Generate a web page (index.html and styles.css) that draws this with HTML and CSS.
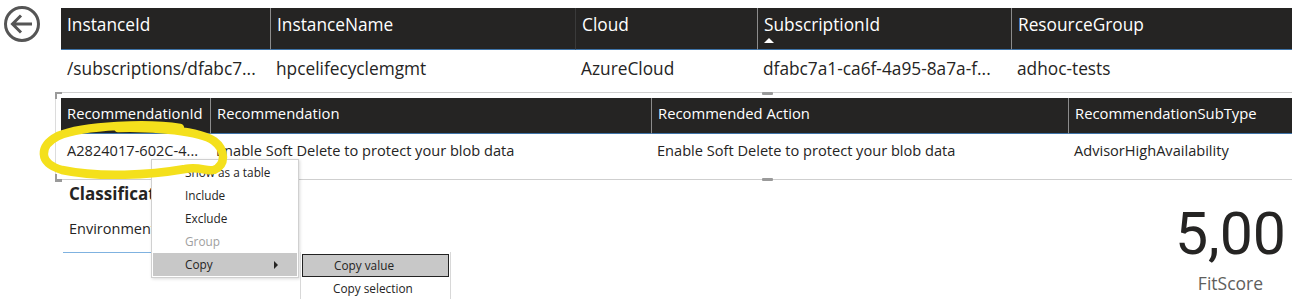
FILE: index.html
```html
<!DOCTYPE html>
<html>
<head>
<meta charset="utf-8">
<link rel="stylesheet" href="styles.css">
</head>
<body>
<div class="page">
  <div class="back">
    <svg width="38" height="38" viewBox="0 0 38 38"><circle cx="19" cy="19" r="16.5" fill="none" stroke="#555" stroke-width="3"/><path d="M9.5 19 H29 M18 10.5 L9.5 19 L18 27.5" fill="none" stroke="#555" stroke-width="3" stroke-linejoin="miter"/></svg>
  </div>
  <div class="main">
    <div class="grid top-grid">
      <div class="th">InstanceId</div>
      <div class="th">InstanceName</div>
      <div class="th dark-sep">Cloud</div>
      <div class="th sorted">SubscriptionId</div>
      <div class="th">ResourceGroup</div>
      <div class="td">/subscriptions/dfabc7...</div>
      <div class="td">hpcelifecyclemgmt</div>
      <div class="td">AzureCloud</div>
      <div class="td">dfabc7a1-ca6f-4a95-8a7a-f...</div>
      <div class="td">adhoc-tests</div>
    </div>
    <div class="rec-frame">
      <div class="grid rec-grid">
        <div class="th">RecommendationId</div>
        <div class="th">Recommendation</div>
        <div class="th">Recommended Action</div>
        <div class="th">RecommendationSubType</div>
        <div class="td">A2824017-602C-4...</div>
        <div class="td">Enable Soft Delete to protect your blob data</div>
        <div class="td">Enable Soft Delete to protect your blob data</div>
        <div class="td">AdvisorHighAvailability</div>
      </div>
    </div>
    <div class="lower">
      <div class="classif">
        <div class="classif-title">Classification</div>
        <div class="classif-value">Environment</div>
      </div>
      <div class="score">
        <div class="score-num">5,00</div>
        <div class="score-label">FitScore</div>
      </div>
    </div>
  </div>
</div>

<div class="menu">
  <div class="mi">Show as a table</div>
  <div class="mi">Include</div>
  <div class="mi">Exclude</div>
  <div class="mi disabled">Group</div>
  <div class="mi active">Copy<span class="caret"></span></div>
</div>
<div class="submenu">
  <div class="mi focused">Copy value</div>
  <div class="mi">Copy selection</div>
</div>

<svg class="scribble" width="240" height="70" viewBox="30 115 240 70"><path d="M180 128 C150 123, 84 125, 58 136 C39 146, 38 163, 62 170 C100 178, 150 175, 185 169 C200 166, 206 172, 214 170 C226 165, 226 150, 214 141 C200 131, 155 127, 118 128" fill="none" stroke="#f4e01c" stroke-width="8.5" stroke-linecap="round"/></svg>
</body>
</html>
```

FILE: styles.css
```css
html, body {
  margin: 0;
  padding: 0;
  background: #fff;
  overflow: hidden;
}
body {
  font-family: "Open Sans", "Noto Sans", sans-serif;
  color: #252423;
  width: 1292px;
  height: 299px;
  position: relative;
}
.page {
  display: flex;
  padding-top: 8px;
}
.back {
  width: 61px;
  flex: none;
}
.back svg {
  display: block;
  margin: -3px 0 0 3px;
}
.main {
  flex: 1;
  min-width: 0;
}
.grid {
  display: grid;
}
.top-grid {
  grid-template-columns: 209px 305px 182px 254px 1fr;
}
.th {
  background: #252423;
  color: #fff;
  white-space: nowrap;
  overflow: hidden;
  box-sizing: border-box;
  border-left: 1px solid #8c8c8c;
  border-bottom: 1px solid #3e73a8;
  position: relative;
}
.th:first-child {
  border-left: none;
}
.top-grid .th {
  height: 42px;
  font-size: 17.3px;
  line-height: 34px;
  padding-left: 6px;
}
.top-grid .th.dark-sep {
  border-left-color: #3a3a3a;
}
.sorted::after {
  content: "";
  position: absolute;
  left: 6px;
  top: 30px;
  border-left: 5px solid transparent;
  border-right: 5px solid transparent;
  border-bottom: 5px solid #fff;
}
.td {
  white-space: nowrap;
  overflow: hidden;
}
.top-grid .td {
  height: 42px;
  font-size: 17.3px;
  line-height: 38px;
  padding-left: 6px;
}
.rec-frame {
  margin-left: -6px;
  border-top: 1px solid #cfcfcf;
  border-left: 1px solid #dcdcdc;
  padding: 5px 0 0 5px;
  position: relative;
}
.rec-frame::before,
.rec-frame::after {
  content: "";
  position: absolute;
  left: -1px;
  width: 5px;
  height: 5px;
  border-left: 2px solid #9a9a9a;
}
.rec-frame::before {
  top: -1px;
  border-top: 2px solid #9a9a9a;
}
.rec-frame::after {
  bottom: -2px;
  border-bottom: 3px solid #9a9a9a;
}
.rec-grid {
  grid-template-columns: 149px 441px 417px 1fr;
  border-bottom: 1px solid #cfcfcf;
  position: relative;
}
.rec-grid::before,
.rec-grid::after {
  content: "";
  position: absolute;
  left: 701px;
  width: 11px;
  height: 3px;
  background: #9a9a9a;
  border-radius: 1px;
}
.rec-grid::before { top: -6px; }
.rec-grid::after { bottom: -2px; }
.rec-grid .th {
  height: 36px;
  font-size: 14.8px;
  line-height: 30px;
  padding-left: 6px;
}
.rec-grid .td {
  height: 45px;
  font-size: 14.6px;
  line-height: 32px;
  padding-left: 6px;
}
.lower {
  display: flex;
  justify-content: space-between;
}
.classif {
  margin-left: 2px;
  width: 230px;
  padding-left: 6px;
  border-bottom: 1px solid #7fb2e0;
  height: 72px;
}
.classif-title {
  font-weight: 700;
  font-size: 17px;
  line-height: 22px;
  margin-top: 3px;
}
.classif-value {
  font-size: 14.5px;
  line-height: 20px;
  margin-top: 14px;
}
.score {
  display: flex;
  flex-direction: column;
  align-items: center;
  margin-right: 6px;
  padding-top: 24px;
}
.score-num {
  font-family: Roboto, "DejaVu Sans", sans-serif;
  font-size: 59px;
  line-height: 60px;
  color: #252423;
}
.score-label {
  font-size: 17.5px;
  line-height: 22px;
  color: #605e5c;
  margin-top: 8px;
}
.scribble {
  position: absolute;
  left: 30px;
  top: 115px;
}
.menu {
  position: absolute;
  left: 151px;
  top: 159px;
  width: 148px;
  background: #fff;
  border: 1px solid #d0d0d0;
  box-shadow: 1px 1px 3px rgba(0,0,0,0.15);
  padding-top: 1px;
  box-sizing: border-box;
  height: 119px;
}
.mi {
  height: 23px;
  line-height: 23px;
  font-size: 11.8px;
  padding-left: 33px;
  color: #252423;
  position: relative;
  white-space: nowrap;
}
.mi.disabled {
  color: #a0a0a0;
}
.mi.active {
  background: #c8c8c8;
  margin: 0 1px;
  padding-left: 32px;
}
.caret {
  position: absolute;
  left: 121px;
  top: 8px;
  border-top: 4px solid transparent;
  border-bottom: 4px solid transparent;
  border-left: 4px solid #252423;
}
.submenu {
  position: absolute;
  left: 300px;
  top: 252px;
  width: 151px;
  height: 60px;
  background: #fff;
  border-left: 1px solid #d8d8d8;
  border-right: 1px solid #d8d8d8;
  padding-top: 2px;
  box-sizing: border-box;
}
.submenu .mi {
  padding-left: 32px;
}
.submenu .mi.focused {
  background: #c8c8c8;
  border: 1px solid #222;
  height: 23px;
  line-height: 21px;
  box-sizing: border-box;
  margin: 0 1px;
  padding-left: 31px;
}
```
